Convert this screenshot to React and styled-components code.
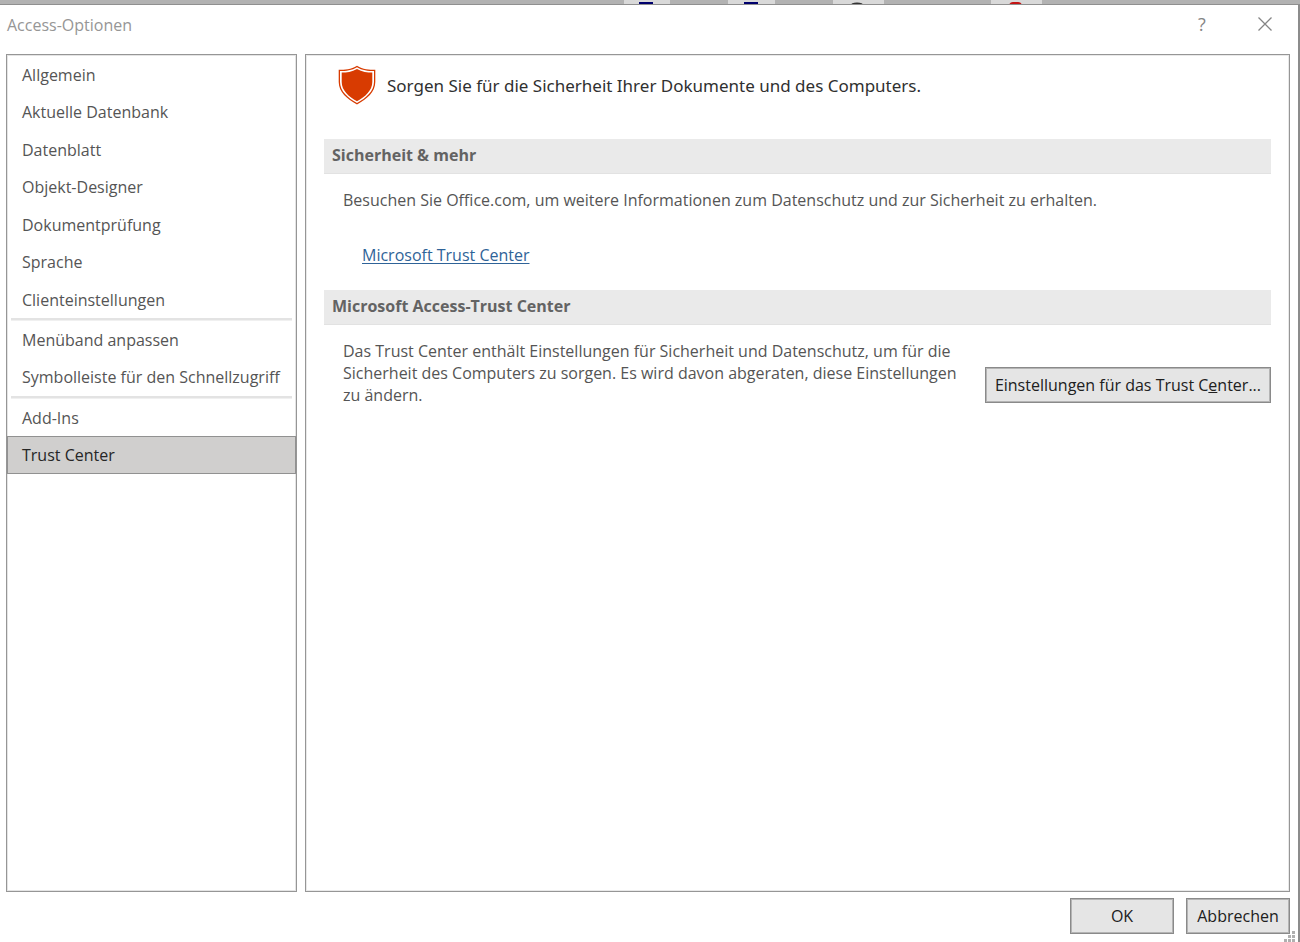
import React from "react";
import styled, { createGlobalStyle } from "styled-components";

const GlobalStyle = createGlobalStyle`
  *, *::before, *::after { box-sizing: border-box; }
  body {
    margin: 0;
    background: #fff;
    color: #555;
    font: 16px/22px "Open Sans", "Noto Sans", sans-serif;
  }
  button { font: inherit; }
`;

const Window = styled.div`
  display: flex;
  flex-direction: column;
  min-height: 100vh;
`;

const Backdrop = styled.svg`
  display: block;
  flex: none;
  width: 100%;
  height: 5px;
  background: #b2b2b2;
`;

const Dialog = styled.div`
  flex: 1;
  display: flex;
  flex-direction: column;
  padding: 0 8px 8px 6px;
  border-right: 2px solid #8c8c8c;
  position: relative;
`;

const TitleBar = styled.header`
  display: flex;
  align-items: center;
  height: 49px;
  padding: 0 15px 10px 1px;
  color: #969696;
`;

const Title = styled.h1`
  flex: 1;
  margin: 0;
  font-size: 16px;
  font-weight: 400;
`;

const TitleButton = styled.button`
  display: flex;
  align-items: center;
  justify-content: center;
  width: 20px;
  height: 24px;
  margin-left: 43px;
  padding: 0 0 2px;
  border: 0;
  background: none;
  color: #858585;
  font-size: 18px;
`;

const Body = styled.div`
  flex: 1;
  display: flex;
  gap: 8px;
`;

const Sidebar = styled.nav`
  flex: none;
  width: 291px;
  padding-top: 1px;
  border: 1px solid #969696;
  box-shadow: inset 0 0 0 1px #e4e4e4;
`;

const NavGroup = styled.ul`
  margin: 0;
  padding: 0;
  list-style: none;

  & + &::before {
    content: "";
    display: block;
    height: 3px;
    margin: 0 4px;
    background: #e3e3e3;
    border-bottom: 1px solid #f0f0f0;
  }
`;

const NavRow = styled.li`
  height: 37px;
  &:nth-child(even) { height: 38px; }
`;

const NavItem = styled.button`
  width: 100%;
  height: 100%;
  padding: 0 14px;
  border: 1px solid ${(p) => (p.$active ? "#919191" : "transparent")};
  background: ${(p) => (p.$active ? "#d0cfce" : "transparent")};
  color: ${(p) => (p.$active ? "#262626" : "#555")};
  text-align: left;
  white-space: nowrap;
`;

const Content = styled.main`
  flex: 1;
  min-width: 0;
  padding: 9px 18px;
  border: 1px solid #969696;
  box-shadow: inset 0 0 0 1px #e9e9e9;
`;

const Intro = styled.div`
  display: flex;
  align-items: center;
  gap: 11px;
  height: 44px;
  margin-bottom: 31px;
  padding-left: 14px;
`;

const IntroText = styled.p`
  margin: 0;
  color: #303030;
  font-family: "Noto Sans", "Open Sans", sans-serif;
  font-size: 17px;
  line-height: 24px;
`;

const SectionTitle = styled.h2`
  margin: 0;
  height: 35px;
  padding: 0 8px;
  background: #eaeaea;
  border-bottom: 1px solid #e2e2e2;
  color: #636363;
  font-size: 16px;
  font-weight: 700;
  line-height: 33px;
`;

const SectionBody = styled.div`
  display: flex;
  justify-content: space-between;
  gap: 16px;
  padding: 15px 0 0 19px;
`;

const Stack = styled.div`
  display: flex;
  flex-direction: column;
  align-items: flex-start;
  gap: 33px;
  padding-bottom: 24px;
`;

const Text = styled.p`
  margin: 0;
  max-width: 620px;
`;

const WideText = styled(Text)`
  max-width: none;
`;

const Link = styled.a`
  margin-left: 19px;
  color: #2f6398;
  text-underline-offset: 2px;
`;

const PushButton = styled.button`
  flex: none;
  align-self: flex-start;
  height: 36px;
  min-width: 104px;
  padding: 0 9px;
  border: 1px solid #8a8a8a;
  box-shadow: inset 0 0 0 1px #b4b4b4;
  background: #e5e5e5;
  color: #202020;
  white-space: nowrap;
`;

const SettingsButton = styled(PushButton)`
  margin-top: 27px;
`;

const Footer = styled.footer`
  display: flex;
  justify-content: flex-end;
  gap: 12px;
  padding-top: 6px;
`;

const Grip = styled.svg`
  position: absolute;
  right: 3px;
  bottom: 0;
`;

const groups = [
  ["Allgemein", "Aktuelle Datenbank", "Datenblatt", "Objekt-Designer", "Dokumentprüfung", "Sprache", "Clienteinstellungen"],
  ["Menüband anpassen", "Symbolleiste für den Schnellzugriff"],
  ["Add-Ins", "Trust Center"],
];

export default function App() {
  return (
    <Window>
      <GlobalStyle />
      <Backdrop aria-hidden="true">
        <path d="M624 0h46v4h-46zM728 0h47v4h-47zM833 0h51v4h-51zM991 0h51v4h-51z" fill="#d9d9d9" />
        <path d="M639 2h14v2h-14zM744 2h14v2h-14z" fill="#00006e" />
        <path d="M852 4.500q5-2 10 0" fill="none" stroke="#333" strokeWidth="2" />
        <path d="M1009 5q1-3 4-3h5q3 0 4 3z" fill="#c41414" />
        <rect y="4" width="100%" height="1" fill="#8f8f8f" />
      </Backdrop>
      <Dialog>
        <TitleBar>
          <Title>Access-Optionen</Title>
          <TitleButton type="button" aria-label="Hilfe">?</TitleButton>
          <TitleButton type="button" aria-label="Schließen">
            <svg width="14" height="14" viewBox="0 0 14 14" fill="none" stroke="#858585" strokeWidth="1.300">
              <path d="M.5.5l13 13M13.500.5l-13 13" />
            </svg>
          </TitleButton>
        </TitleBar>
        <Body>
          <Sidebar>
            {groups.map((items) => (
              <NavGroup key={items[0]}>
                {items.map((item) => (
                  <NavRow key={item}>
                    <NavItem type="button" $active={item === "Trust Center"}>{item}</NavItem>
                  </NavRow>
                ))}
              </NavGroup>
            ))}
          </Sidebar>
          <Content>
            <Intro>
              <svg width="38" height="42" viewBox="0 0 38 42" aria-hidden="true">
                <path d="M19 .8C25 4.500 31 4.800 37.300 4.800V17c0 10-8.300 17-18.300 22.500C9 34 .7 27 .7 17V4.800C7 4.800 13 4.500 19 .8z" fill="#d83b01" />
                <path d="M19 2.300C24 5.500 30 6.100 36 6.100V17c0 9.300-8 16-17 21C10 33 2 26.300 2 17V6.100C8 6.100 14 5.500 19 2.300z" fill="#fff" />
                <path d="M19 4C24 7 29.500 7.600 34.300 7.600V17c0 8.500-7 14.700-15.300 19.200C10.700 31.700 3.700 25.500 3.700 17V7.600C8.500 7.600 14 7 19 4z" fill="#d83b01" />
              </svg>
              <IntroText>Sorgen Sie für die Sicherheit Ihrer Dokumente und des Computers.</IntroText>
            </Intro>
            <section>
              <SectionTitle>Sicherheit &amp; mehr</SectionTitle>
              <SectionBody>
                <Stack>
                  <WideText>Besuchen Sie Office.com, um weitere Informationen zum Datenschutz und zur Sicherheit zu erhalten.</WideText>
                  <Link href="#trust-center">Microsoft Trust Center</Link>
                </Stack>
              </SectionBody>
            </section>
            <section>
              <SectionTitle>Microsoft Access-Trust Center</SectionTitle>
              <SectionBody>
                <Text>
                  Das Trust Center enthält Einstellungen für Sicherheit und Datenschutz, um für die Sicherheit des
                  Computers zu sorgen. Es wird davon abgeraten, diese Einstellungen zu ändern.
                </Text>
                <SettingsButton type="button">Einstellungen für das Trust C<u>e</u>nter...</SettingsButton>
              </SectionBody>
            </section>
          </Content>
        </Body>
        <Footer>
          <PushButton type="button">OK</PushButton>
          <PushButton type="button">Abbrechen</PushButton>
        </Footer>
        <Grip width="11" height="11" fill="#b0b0b0" aria-hidden="true">
          <path d="M8 0h3v3h-3zM4 4h3v3h-3zM8 4h3v3h-3zM0 8h3v3h-3zM4 8h3v3h-3zM8 8h3v3h-3z" />
        </Grip>
      </Dialog>
    </Window>
  );
}
